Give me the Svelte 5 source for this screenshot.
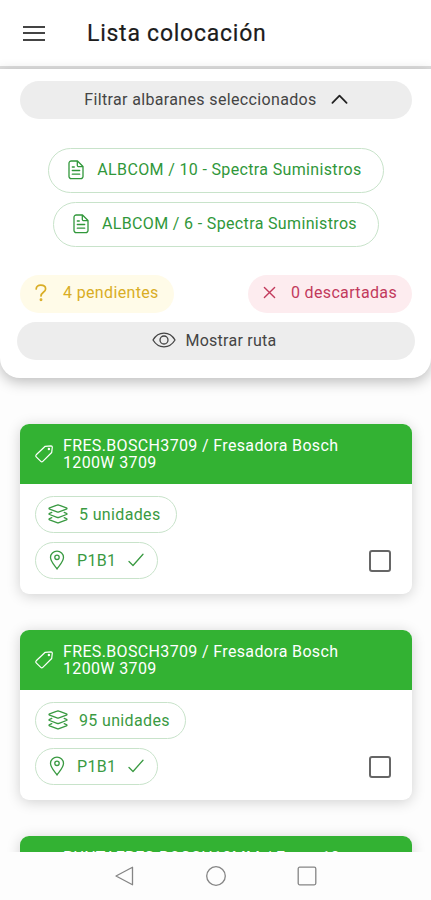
<script lang="ts">
  interface Item {
    title: string;
    units: number;
    location: string;
    done: boolean;
  }

  let showNotes = $state(true);

  const notes = [
    { label: 'ALBCOM / 10 - Spectra Suministros' },
    { label: 'ALBCOM / 6 - Spectra Suministros' },
  ];

  let items = $state<Item[]>([
    { title: 'FRES.BOSCH3709 / Fresadora Bosch 1200W 3709', units: 5, location: 'P1B1', done: false },
    { title: 'FRES.BOSCH3709 / Fresadora Bosch 1200W 3709', units: 95, location: 'P1B1', done: false },
    { title: 'PUNTAFRES.BOSCH10MM / Fresa 10 milímetros', units: 10, location: 'P1B1', done: false },
  ]);
</script>

<div class="screen">
  <header>
    <button type="button" class="menu" aria-label="Menú">
      <span></span>
      <span></span>
      <span></span>
    </button>
    <h1>Lista colocación</h1>
  </header>

  <section class="panel">
    <button type="button" class="pill filter" onclick={() => (showNotes = !showNotes)}>
      <span>Filtrar albaranes seleccionados</span>
      <svg class="chevron" class:closed={!showNotes} viewBox="0 0 18 12">
        <path d="M1.5 10 9 2.5l7.5 7.5" />
      </svg>
    </button>

    {#if showNotes}
      <div class="notes">
        {#each notes as note}
          <button type="button" class="note">
            <svg viewBox="0 0 16 20">
              <path d="M3 1h6.5L15 6.500V16.500a2.200 2.200 0 0 1-2.200 2.200H3.200A2.200 2.200 0 0 1 1 16.500V3.200A2.200 2.200 0 0 1 3.200 1M9.300 1v4.200a1.500 1.500 0 0 0 1.500 1.500H15M4.300 10.500h7.400M4.300 14.200h7.400M4.300 7h2" />
            </svg>
            <span>{note.label}</span>
          </button>
        {/each}
      </div>
    {/if}

    <div class="counters">
      <span class="counter pending">
        <svg viewBox="0 0 12 18">
          <path d="M1.200 5C1.200 2.500 3.200 1.200 5.800 1.200s4.800 1.300 4.800 3.700c0 3.400-4.600 3.300-4.600 7.100" />
          <circle cx="6" cy="15.800" r=".6" />
        </svg>
        4 pendientes
      </span>
      <span class="counter discarded">
        <svg viewBox="0 0 14 14">
          <path d="m1.500 1.500 11 11M12.500 1.500l-11 11" />
        </svg>
        0 descartadas
      </span>
    </div>

    <button type="button" class="pill route">
      <svg viewBox="0 0 24 16">
        <path d="M1 8c2.600-4.300 6.400-6.800 11-6.800S20.400 3.700 23 8c-2.600 4.300-6.400 6.800-11 6.800S3.600 12.300 1 8Z" />
        <circle cx="12" cy="8" r="4" />
      </svg>
      <span>Mostrar ruta</span>
    </button>
  </section>

  <main>
    {#each items as item}
      <article>
        <div class="card-head">
          <svg viewBox="0 0 20 20">
            <path d="M11.200 2.300 17 1.800q1.300 0 1.300 1.300l-.6 5.400-8.900 8.900q-1 1-2 0L2.200 12.800q-1-1 0-2Z" />
            <circle cx="14.900" cy="5" r=".6" />
          </svg>
          <h2>{item.title}</h2>
        </div>
        <div class="card-body">
          <div class="chips">
            <span class="chip">
              <svg class="layers" viewBox="0 0 22 22">
                <path d="M10 2.200q1-.4 2 0l7.400 2.700q1.200.6 0 1.200L12 8.900q-1 .4-2 0L2.600 6.100q-1.200-.6 0-1.200ZM4.800 9.400 2.600 10.300q-1.200.6 0 1.200L10 14.300q1 .4 2 0l7.400-2.800q1.200-.6 0-1.200l-2.200-.9M4.800 14.700 2.600 15.600q-1.200.6 0 1.200L10 19.600q1 .4 2 0l7.400-2.800q1.200-.6 0-1.200l-2.200-.9" />
              </svg>
              <span>{item.units} unidades</span>
            </span>
            <span class="chip place">
              <svg class="pin" viewBox="0 0 16 20">
                <path d="M8 19C5.500 15.500 1.500 11.500 1.500 7.300a6.500 6.200 0 0 1 13 0C14.500 11.500 10.500 15.500 8 19Z" />
                <circle cx="8" cy="7.300" r="2.200" />
              </svg>
              <span>{item.location}</span>
              <svg class="check" viewBox="0 0 16 14">
                <path d="m1 8.500 4 4L15 1.200" />
              </svg>
            </span>
          </div>
          <input type="checkbox" bind:checked={item.done} aria-label={item.title} />
        </div>
      </article>
    {/each}
  </main>

  <nav>
    <svg viewBox="0 0 20 20"><path d="M17.500 1.200v17.600L1 10Z" /></svg>
    <svg viewBox="0 0 20 20"><circle cx="10" cy="10" r="9.300" /></svg>
    <svg viewBox="0 0 20 20"><rect x="1.200" y="1.200" width="17.600" height="17.600" rx="1.500" /></svg>
  </nav>
</div>

<style>
  :global(body) {
    margin: 0;
    background: #fdfdfd;
  }

  .screen {
    display: flex;
    flex-direction: column;
    width: 100%;
    height: 900px;
    overflow: hidden;
    background: #fdfdfd;
    color: #333;
    font-family: Roboto, 'Liberation Sans', sans-serif;
    font-size: 16px;
    letter-spacing: 0.35px;
  }

  svg {
    flex: none;
    fill: none;
    stroke: currentColor;
    stroke-width: 1.3;
    stroke-linecap: round;
    stroke-linejoin: round;
  }

  button {
    border: none;
    font: inherit;
    letter-spacing: inherit;
    color: inherit;
    cursor: pointer;
  }

  header {
    display: flex;
    align-items: center;
    flex: none;
    box-sizing: border-box;
    height: 69px;
    padding: 0 23px;
    border-bottom: 3px solid #dedede;
    background: #fff;
  }

  .menu {
    display: flex;
    flex-direction: column;
    gap: 4.5px;
    width: 22px;
    margin-right: 42px;
    padding: 0;
    background: none;
  }

  .menu span {
    height: 2px;
    background: #444;
  }

  h1 {
    margin: 0;
    font-size: 23px;
    font-weight: 400;
    letter-spacing: 0.75px;
    color: #1c1c1c;
    -webkit-text-stroke: 0.2px #1c1c1c;
  }

  .panel {
    flex: none;
    box-sizing: border-box;
    height: 309px;
    padding: 12px 16px 0 17px;
    border-radius: 0 0 20px 20px;
    background: #fff;
    box-shadow: 0 4px 14px rgba(0, 0, 0, 0.26);
    z-index: 1;
  }

  .pill {
    display: flex;
    align-items: center;
    justify-content: center;
    width: 100%;
    height: 38px;
    padding: 0 0 2px;
    border-radius: 19px;
    background: #ededed;
    color: #444;
  }

  .filter {
    width: calc(100% - 6px);
    margin: 0 3px;
    gap: 14px;
  }

  .chevron {
    width: 17px;
    height: 12px;
    color: #222;
    stroke-width: 1.9;
  }

  .chevron.closed {
    transform: rotate(180deg);
  }

  .notes {
    display: flex;
    flex-direction: column;
    align-items: center;
    gap: 9px;
    padding: 29px 0 28px;
  }

  .note {
    display: flex;
    align-items: center;
    gap: 13px;
    box-sizing: border-box;
    height: 45px;
    padding: 0 21px 2px 19px;
    border: 1px solid #c8e3ca;
    border-radius: 23px;
    background: #fff;
    color: #30973a;
  }

  .note svg {
    width: 16px;
    height: 20px;
  }

  .counters {
    display: flex;
    justify-content: space-between;
    margin: 0 3px 9px;
  }

  .counter {
    display: flex;
    align-items: center;
    box-sizing: border-box;
    height: 38px;
    padding: 0 15px 3px;
    border-radius: 19px;
  }

  .pending {
    gap: 16px;
    background: #fffbe8;
    color: #d9ad25;
  }

  .pending svg {
    width: 12px;
    height: 18px;
    stroke-width: 1.7;
  }

  .discarded {
    gap: 15px;
    background: #fdecef;
    color: #c23a5c;
  }

  .discarded svg {
    width: 13px;
    height: 13px;
    stroke-width: 1.5;
  }

  .route {
    gap: 10px;
    padding-right: 4px;
    letter-spacing: 0.25px;
  }

  .route svg {
    width: 24px;
    height: 16px;
  }

  main {
    display: flex;
    flex-direction: column;
    flex: 1;
    gap: 36px;
    min-height: 0;
    overflow: hidden;
    padding: 46px 19px 0 20px;
  }

  article {
    flex: none;
    height: 170px;
    border-radius: 9px;
    background: #fff;
    box-shadow: 0 2px 14px rgba(0, 0, 0, 0.18);
  }

  .card-head {
    display: flex;
    align-items: center;
    box-sizing: border-box;
    height: 60px;
    padding: 0 50px 1px 14px;
    gap: 9px;
    border-radius: 9px 9px 0 0;
    background: #33b233;
    color: #fff;
  }

  .card-head svg {
    width: 20px;
    height: 20px;
    stroke-width: 1.2;
  }

  h2 {
    margin: 0;
    font-size: 16px;
    font-weight: 400;
    line-height: 17px;
  }

  .card-body {
    display: flex;
    align-items: flex-end;
    justify-content: space-between;
    padding: 12px 21px 15px 15px;
  }

  .chips {
    display: flex;
    flex-direction: column;
    align-items: flex-start;
    gap: 9px;
  }

  .chip {
    display: flex;
    align-items: center;
    gap: 10px;
    box-sizing: border-box;
    height: 37px;
    padding: 0 15px 1px 11px;
    border: 1px solid #c8e3ca;
    border-radius: 19px;
    color: #3a9a42;
  }

  .place {
    gap: 12px;
    padding: 0 13px 1px;
  }

  .layers {
    width: 22px;
    height: 22px;
  }

  .pin {
    width: 16px;
    height: 20px;
  }

  .check {
    width: 16px;
    height: 14px;
  }

  input {
    appearance: none;
    box-sizing: border-box;
    width: 22px;
    height: 22px;
    margin: 0 0 7px;
    border: 2px solid #666;
    border-radius: 3px;
    background: #fff;
  }

  input:checked {
    border-color: #33b233;
    background: #33b233;
  }

  nav {
    display: flex;
    align-items: center;
    justify-content: center;
    flex: none;
    height: 48px;
    gap: 71px;
    background: #fdfdfd;
    color: #858585;
    z-index: 1;
  }

  nav svg {
    width: 20px;
    height: 20px;
  }
</style>
